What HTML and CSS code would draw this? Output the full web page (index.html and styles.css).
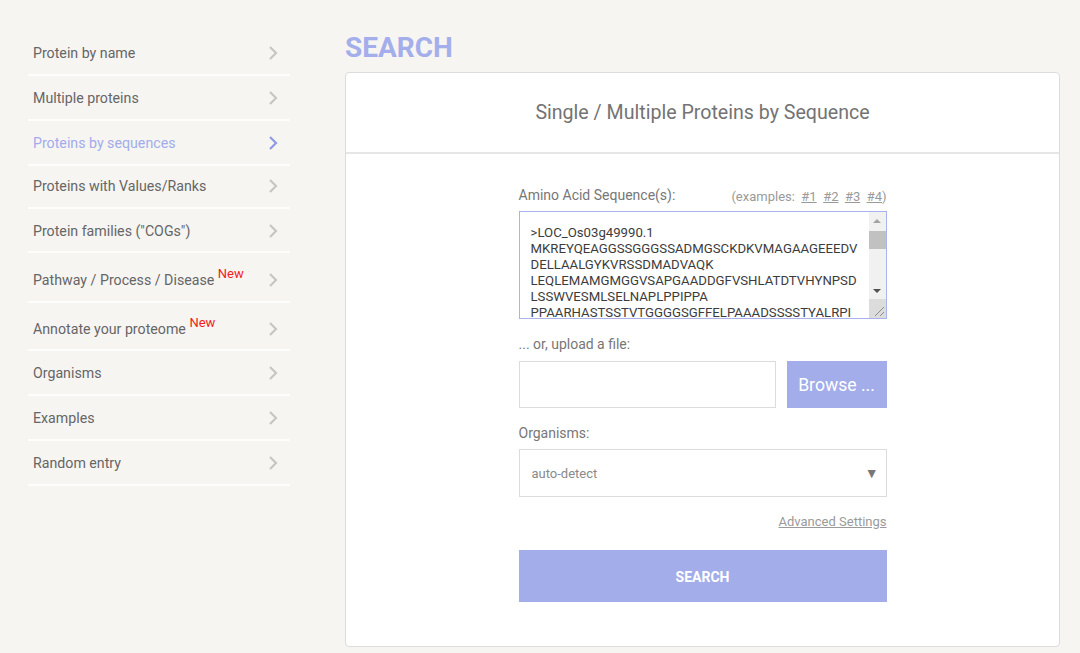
FILE: index.html
```html
<!DOCTYPE html>
<html lang="en">
<head>
<meta charset="utf-8">
<title>Search</title>
<link rel="stylesheet" href="styles.css">
</head>
<body>
<div class="page">
  <nav class="sidebar">
    <a class="nav-item" href="#"><span class="label">Protein by name</span><svg class="chev" viewBox="0 0 10 16"><path d="M2 2 L8 8 L2 14"/></svg></a>
    <a class="nav-item" href="#"><span class="label">Multiple proteins</span><svg class="chev" viewBox="0 0 10 16"><path d="M2 2 L8 8 L2 14"/></svg></a>
    <a class="nav-item active" href="#"><span class="label">Proteins by sequences</span><svg class="chev" viewBox="0 0 10 16"><path d="M2 2 L8 8 L2 14"/></svg></a>
    <a class="nav-item r4" href="#"><span class="label">Proteins with Values/Ranks</span><svg class="chev" viewBox="0 0 10 16"><path d="M2 2 L8 8 L2 14"/></svg></a>
    <a class="nav-item r5" href="#"><span class="label">Protein families ("COGs")</span><svg class="chev" viewBox="0 0 10 16"><path d="M2 2 L8 8 L2 14"/></svg></a>
    <a class="nav-item r6" href="#"><span class="label">Pathway / Process / Disease <sup class="new">New</sup></span><svg class="chev" viewBox="0 0 10 16"><path d="M2 2 L8 8 L2 14"/></svg></a>
    <a class="nav-item r7" href="#"><span class="label">Annotate your proteome <sup class="new">New</sup></span><svg class="chev" viewBox="0 0 10 16"><path d="M2 2 L8 8 L2 14"/></svg></a>
    <a class="nav-item" href="#"><span class="label">Organisms</span><svg class="chev" viewBox="0 0 10 16"><path d="M2 2 L8 8 L2 14"/></svg></a>
    <a class="nav-item" href="#"><span class="label">Examples</span><svg class="chev" viewBox="0 0 10 16"><path d="M2 2 L8 8 L2 14"/></svg></a>
    <a class="nav-item" href="#"><span class="label">Random entry</span><svg class="chev" viewBox="0 0 10 16"><path d="M2 2 L8 8 L2 14"/></svg></a>
  </nav>
  <main class="main">
    <h1 class="title">SEARCH</h1>
    <section class="card">
      <header class="card-head">Single / Multiple Proteins by Sequence</header>
      <form class="form">
        <div class="label-row">
          <label class="field-label">Amino Acid Sequence(s):</label>
          <span class="examples">(examples:&nbsp; <a href="#">#1</a>&nbsp; <a href="#">#2</a>&nbsp; <a href="#">#3</a>&nbsp; <a href="#">#4</a>)</span>
        </div>
        <div class="seq-box">
        <textarea class="seq" spellcheck="false">&gt;LOC_Os03g49990.1
MKREYQEAGGSSGGGSSADMGSCKDKVMAGAAGEEEDV
DELLAALGYKVRSSDMADVAQK
LEQLEMAMGMGGVSAPGAADDGFVSHLATDTVHYNPSD
LSSWVESMLSELNAPLPPIPPA
PPAARHASTSSTVTGGGGSGFFELPAAADSSSSTYALRPI
SLPVVATADPSAAASSTATGDGGGPGEAGSAAAREHLRS
AGGSLQALLAAEAAAERERRLLEMHARAGDEAGSDGH
RRGGGGGGGGAAVVHMLLECARAAVQEDDYPLAREHL
ALLRGVATSSSAGAMHRIAAVFVDALRRRLLLQQSQNL
SGSSDHRGSAAGGGGGGSGGNAAAAGPWRWLHTGGS
DSNGGGAGEEVPAPAMFMMSRPSTGSQLMSPLPLNLP
PAHAHQGGGGGGGGGGFGYRRAAAEAAAPSSSSMSPT
PAVVEPVTQEPLAAKALLADDSSGAAAGVAAEAAEHA
ALMSWLAEAGGHGGATPEPSLEEALSDSRAGPFGLPG
VPGPERPQHHHPLTPIGNNNNSSAHQAAAHAALCPG
LTPGLSGSHDEQGMLQPQQHLTASSQDLLWNLTQP</textarea>
          <div class="sbar" aria-hidden="true">
            <div class="sbtn"><svg viewBox="0 0 8 4" class="tri up"><polygon points="0,4 4,0 8,4"/></svg></div>
            <div class="strack"><div class="sthumb"></div></div>
            <div class="sbtn"><svg viewBox="0 0 8 4" class="tri down"><polygon points="0,0 8,0 4,4"/></svg></div>
            <div class="sresize"><svg viewBox="0 0 17 19" class="grip"><path d="M6 17 L15 8 M11 17 L15 13"/></svg></div>
          </div>
        </div>
        <div class="field-label spaced">... or, upload a file:</div>
        <div class="file-row">
          <div class="file-box"></div>
          <button type="button" class="browse">Browse ...</button>
        </div>
        <div class="field-label spaced">Organisms:</div>
        <div class="select-wrap">
          <select class="select">
            <option>auto-detect</option>
          </select>
          <span class="arrow">▼</span>
        </div>
        <div class="adv-row"><a href="#" class="adv">Advanced Settings</a></div>
        <button type="button" class="submit">SEARCH</button>
      </form>
    </section>
  </main>
</div>
</body>
</html>
```

FILE: styles.css
```css
* { box-sizing: border-box; }
html, body { margin: 0; padding: 0; }
body {
  background: #f6f5f2;
  font-family: Roboto, "Liberation Sans", Arial, sans-serif;
  color: #666;
  height: 653px;
  overflow: hidden;
}
.page {
  display: flex;
  align-items: flex-start;
  padding-left: 28px;
}
.sidebar {
  width: 262px;
  padding-top: 31px;
  display: flex;
  flex-direction: column;
}
.nav-item {
  display: flex;
  align-items: center;
  justify-content: space-between;
  padding: 12px 12px 11px 5px;
  border-bottom: 2px solid #fdfdfc;
  text-decoration: none;
  color: #666;
  font-size: 14.2px;
  line-height: 20px;
}
.nav-item.r4 { padding-top: 10px; padding-bottom: 11px; }
.nav-item.r5 { padding-top: 12px; padding-bottom: 10px; }
.nav-item.r6 { padding-top: 17px; padding-bottom: 11px; }
.nav-item.r7 { padding-top: 16px; padding-bottom: 10px; }
.nav-item.active { color: #a2acea; }
.chev {
  width: 10px;
  height: 16px;
  fill: none;
  stroke: #c6c6c4;
  stroke-width: 2.2;
}
.nav-item.active .chev { stroke: #8f9be6; }
.new {
  color: #f21c1c;
  font-size: 13px;
  line-height: 0;
  vertical-align: 7px;
}
.main {
  margin-left: 55px;
  width: 715px;
}
.title {
  margin: 0;
  padding-top: 32px;
  height: 72px;
  font-size: 28px;
  line-height: 32px;
  font-weight: 700;
  color: #a4aeea;
}
.card {
  background: #fff;
  border: 1px solid #dcdcdc;
  border-radius: 4px;
  height: 575px;
}
.card-head {
  height: 81px;
  border-bottom: 2px solid #e6e6e6;
  display: flex;
  align-items: center;
  justify-content: center;
  font-size: 19.6px;
  color: #737373;
  padding-bottom: 1px;
}
.form {
  width: 368px;
  margin: 0 auto;
  padding-top: 31px;
  display: flex;
  flex-direction: column;
}
.label-row {
  display: flex;
  justify-content: space-between;
  align-items: center;
  height: 20px;
  margin-bottom: 6px;
}
.field-label {
  font-size: 14px;
  line-height: 20px;
  color: #777;
}
.field-label.spaced { margin-top: 15px; }
.examples {
  font-size: 13px;
  color: #9a9a9a;
  padding-top: 3px;
}
.examples a { color: #9a9a9a; text-decoration: underline; }
.seq-box {
  display: flex;
  height: 108px;
  border: 1px solid #a9b2ea;
  background: #fff;
}
.seq {
  flex: 1;
  min-width: 0;
  height: 100%;
  resize: none;
  border: none;
  outline: none;
  padding: 13px 2px 4px 11px;
  font-family: Roboto, "Liberation Sans", Arial, sans-serif;
  font-size: 13.2px;
  line-height: 16px;
  color: #3c3c3c;
  overflow-y: auto;
  scrollbar-width: none;
}
.sbar {
  width: 17px;
  display: flex;
  flex-direction: column;
  background: #f1f1f1;
}
.sbtn {
  height: 17px;
  display: flex;
  align-items: center;
  justify-content: center;
}
.tri { width: 8px; height: 4px; }
.tri.up { fill: #a3a3a3; }
.tri.down { fill: #505050; }
.strack {
  flex: 1;
  padding-top: 2px;
}
.sthumb {
  height: 18px;
  background: #c1c1c1;
}
.sresize {
  height: 19px;
  background: #dcdcdc;
}
.grip {
  display: block;
  width: 17px;
  height: 19px;
  fill: none;
  stroke: #8c8c8c;
  stroke-width: 1;
}
.file-row {
  display: flex;
  justify-content: space-between;
  margin-top: 7px;
  height: 47px;
}
.file-box {
  width: 257px;
  border: 1px solid #dcdcdc;
}
.browse {
  width: 100px;
  border: none;
  background: #a3ade9;
  color: #fff;
  font-family: Roboto, "Liberation Sans", Arial, sans-serif;
  font-size: 17.6px;
  padding: 0;
}
.select-wrap {
  position: relative;
  margin-top: 6px;
  height: 48px;
}
.select {
  appearance: none;
  -webkit-appearance: none;
  width: 100%;
  height: 48px;
  border: 1px solid #dcdcdc;
  border-radius: 0;
  background: #fff;
  padding: 0 12px;
  font-family: Roboto, "Liberation Sans", Arial, sans-serif;
  font-size: 13px;
  color: #8a8a8a;
  outline: none;
}
.arrow {
  position: absolute;
  right: 8px;
  top: 16px;
  font-size: 14px;
  color: #777;
  pointer-events: none;
}
.adv-row {
  display: flex;
  justify-content: flex-end;
  margin-top: 15px;
  line-height: 20px;
}
.adv {
  font-size: 13px;
  color: #9a9a9a;
  text-decoration: underline;
}
.submit {
  margin-top: 18px;
  height: 52px;
  border: none;
  background: #a3ade9;
  color: #fff;
  font-family: Roboto, "Liberation Sans", Arial, sans-serif;
  font-weight: 700;
  font-size: 14px;
  padding-top: 2px;
}
```
